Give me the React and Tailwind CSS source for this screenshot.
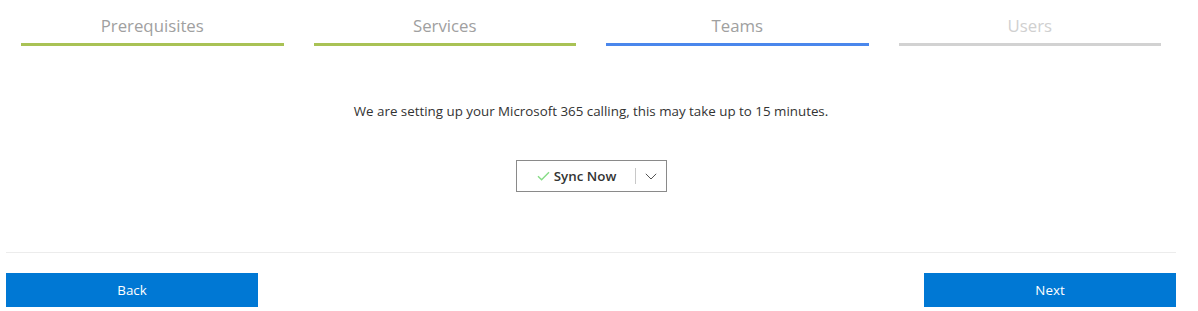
import React from "react";

const font = { fontFamily: '"Segoe UI", "Open Sans", "Noto Sans", sans-serif' };

const steps = [
  { label: "Prerequisites", text: "text-[#a0a0a0]", bar: "bg-[#a9c255]" },
  { label: "Services", text: "text-[#a0a0a0]", bar: "bg-[#a9c255]" },
  { label: "Teams", text: "text-[#a0a0a0]", bar: "bg-[#4a87ec]" },
  { label: "Users", text: "text-[#d0d0d0]", bar: "bg-[#d2d2d2]" },
];

export default function App() {
  return (
    <div className="w-[1198px] h-[311px] bg-white font-['Open_Sans',sans-serif]" style={font}>
      <div className="ml-[6px] w-[1170px] flex flex-col">
        <div className="px-[15px] pt-[14px] grid grid-cols-4 gap-[30px]">
          {steps.map((s) => (
            <div key={s.label} className="flex flex-col items-center">
              <div className={`h-[24px] leading-[24px] text-[16.8px] ${s.text}`}>{s.label}</div>
              <div className={`mt-[5px] h-[3px] w-full ${s.bar}`} />
            </div>
          ))}
        </div>
        <div className="mt-[56px] text-center text-[13.35px] leading-[18px] text-[#333333]">
          We are setting up your Microsoft 365 calling, this may take up to 15 minutes.
        </div>
        <div className="mt-[40px] flex justify-center">
          <div className="w-[151px] h-[32px] border border-[#8a8a8a] flex items-center">
            <div className="flex-1 flex items-center justify-center gap-[4px] pl-[2px]">
              <svg width="13" height="10" viewBox="0 0 13 10" fill="none">
                <path d="M1 5.2 L4.6 8.8 L12 1.2" stroke="#86dc86" strokeWidth="1.4" />
              </svg>
              <span className="text-[13.35px] font-semibold text-[#333333]">Sync Now</span>
            </div>
            <div className="w-px h-[16px] bg-[#c8c8c8]" />
            <div className="w-[30px] flex items-center justify-center">
              <svg width="12" height="7" viewBox="0 0 12 7" fill="none">
                <path d="M0.8 0.8 L6 6 L11.2 0.8" stroke="#555" strokeWidth="1" />
              </svg>
            </div>
          </div>
        </div>
        <div className="mt-[60px] h-px bg-[#ececec]" />
        <div className="mt-[20px] flex justify-between">
          <button className="w-[252px] h-[34px] bg-[#0078d4] text-white text-[13.35px]">Back</button>
          <button className="w-[252px] h-[34px] bg-[#0078d4] text-white text-[13.35px]">Next</button>
        </div>
      </div>
    </div>
  );
}
